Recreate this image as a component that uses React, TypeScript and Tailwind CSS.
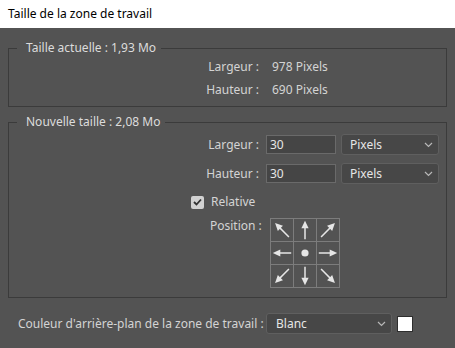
import React from "react";

const font = { fontFamily: '"Noto Sans", "Open Sans", sans-serif' };

function Chevron() {
  return (
    <svg width="9" height="6" viewBox="0 0 9 6" className="shrink-0">
      <path d="M1 1 L4.5 4.5 L8 1" fill="none" stroke="#b8b8b8" strokeWidth="1.2" />
    </svg>
  );
}

function Arrow({ dir }: { dir: string }) {
  const angles: Record<string, number> = {
    n: 0, ne: 45, e: 90, se: 135, s: 180, sw: 225, w: 270, nw: 315,
  };
  if (dir === "c") {
    return (
      <svg width="22" height="22" viewBox="0 0 22 22">
        <circle cx="11" cy="11" r="3.6" fill="#e6e6e6" />
      </svg>
    );
  }
  const diag = dir.length === 2;
  const len = diag ? 9.8 : 9.2;
  return (
    <svg width="22" height="22" viewBox="0 0 22 22">
      <g transform={`rotate(${angles[dir]} 11 11)`}>
        <line x1="11" y1={11 + len} x2="11" y2={11 - len + 5} stroke="#e6e6e6" strokeWidth="1.5" />
        <polygon points={`11,${11 - len} 7.4,${11 - len + 7.5} 14.6,${11 - len + 7.5}`} fill="#e6e6e6" />
      </g>
    </svg>
  );
}

function Select({ value, w, pl }: { value: string; w: string; pl: string }) {
  return (
    <div
      className={`${w} ${pl} flex items-center justify-between pr-[5px] border border-[#5f5f5f] rounded-[3px] bg-[#474747] text-[#e6e6e6]`}
    >
      <span>{value}</span>
      <Chevron />
    </div>
  );
}

export default function App() {
  return (
    <div
      className="w-[455px] h-[348px] bg-[#535353] flex flex-col text-[12px] text-[#d4d4d4] overflow-hidden"
      style={font}
    >
      <div className="h-[28px] bg-white text-black flex items-center pl-[8px] shrink-0">
        Taille de la zone de travail
      </div>

      <div className="px-[8px] flex flex-col">
        <fieldset className="mt-[12px] border border-[#3b3b3b] h-[67px] w-[439px] pb-0">
          <legend className="ml-[8px] px-[9px] pr-[5px] leading-[16px] text-[#dcdcdc]">
            Taille actuelle : 1,93 Mo
          </legend>
          <div className="flex flex-col mt-[-1px]">
            <div className="flex items-center h-[23px]">
              <div className="w-[250px] text-right">Largeur :</div>
              <div className="ml-[13px]">978 Pixels</div>
            </div>
            <div className="flex items-center h-[23px]">
              <div className="w-[250px] text-right">Hauteur :</div>
              <div className="ml-[13px]">690 Pixels</div>
            </div>
          </div>
        </fieldset>

        <fieldset className="mt-[7px] border border-[#3b3b3b] h-[184px] w-[439px]">
          <legend className="ml-[8px] px-[9px] pr-[5px] leading-[16px] text-[#dcdcdc]">
            Nouvelle taille : 2,08 Mo
          </legend>
          <div className="flex flex-col mt-[4px]">
            <div className="flex items-center h-[21px]">
              <div className="w-[250px] text-right">Largeur :</div>
              <div className="ml-[7px] w-[70px] h-[19px] border border-[#6a6a6a] bg-[#454545] text-[#e6e6e6] pl-[3px] flex items-center">
                30
              </div>
              <Select value="Pixels" w="ml-[5px] w-[98px] h-[21px]" pl="pl-[8px]" />
            </div>
            <div className="flex items-center h-[21px] mt-[8px]">
              <div className="w-[250px] text-right">Hauteur :</div>
              <div className="ml-[7px] w-[70px] h-[19px] border border-[#6a6a6a] bg-[#454545] text-[#e6e6e6] pl-[3px] flex items-center">
                30
              </div>
              <Select value="Pixels" w="ml-[5px] w-[98px] h-[21px]" pl="pl-[8px]" />
            </div>
            <div className="flex items-center h-[16px] mt-[10px] pl-[182px]">
              <div className="w-[13px] h-[13px] rounded-[2px] bg-[#d2d2d2] flex items-center justify-center">
                <svg width="9" height="8" viewBox="0 0 9 8">
                  <path d="M1 4 L3.5 6.5 L8 1.5" fill="none" stroke="#333" strokeWidth="1.8" />
                </svg>
              </div>
              <span className="ml-[7px]">Relative</span>
            </div>
            <div className="flex items-start mt-[8px] pl-[201px]">
              <span className="leading-[16px]">Position :</span>
              <div className="ml-[8px] grid grid-cols-3 gap-px p-px bg-[#7c7c7c]">
                {["nw", "n", "ne", "w", "c", "e", "sw", "s", "se"].map((d) => (
                  <div key={d} className="w-[22px] h-[22px] bg-[#535353]">
                    <Arrow dir={d} />
                  </div>
                ))}
              </div>
            </div>
          </div>
        </fieldset>

        <div className="flex items-center mt-[15px] pl-[10px] h-[21px]">
          <span className="w-[248px]">Couleur d'arrière-plan de la zone de travail :</span>
          <Select value="Blanc" w="w-[126px] h-[21px]" pl="pl-[9px]" />
          <div className="ml-[5px] w-[16px] h-[16px] bg-white border border-[#2e2e2e]" />
        </div>
      </div>
    </div>
  );
}
